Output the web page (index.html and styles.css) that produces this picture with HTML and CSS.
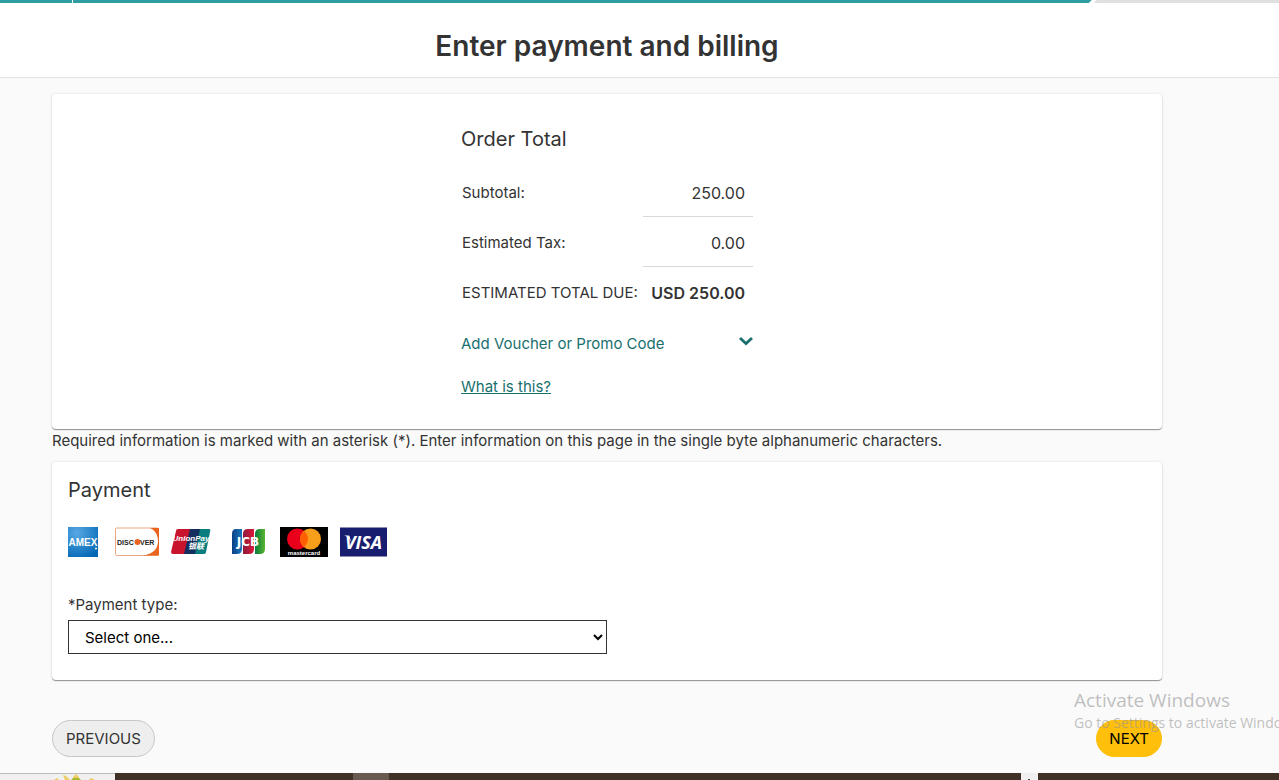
FILE: index.html
```html
<!DOCTYPE html>
<html lang="en">
<head>
    <meta charset="UTF-8">
    <meta name="viewport" content="width=device-width, initial-scale=1.0">
    <title>Enter payment and billing</title>
    <link rel="stylesheet" href="styles.css">
</head>
<body>

    <div class="progress">
        <div class="progress-first"></div>
        <div class="progress-done"></div>
        <div class="progress-left"></div>
    </div>

    <header class="page-header">
        <h1>Enter payment and billing</h1>
    </header>

    <main class="content">
        <section class="card order-card">
            <div class="order">
                <h2>Order Total</h2>
                <table class="totals">
                    <tr><th scope="row">Subtotal:</th><td>250.00</td></tr>
                    <tr><th scope="row">Estimated Tax:</th><td>0.00</td></tr>
                    <tr><th scope="row">ESTIMATED TOTAL DUE:</th><td><strong>USD 250.00</strong></td></tr>
                </table>
                <button type="button" class="voucher">
                    Add Voucher or Promo Code
                    <svg width="14" height="16" viewBox="1 0 14 16" aria-hidden="true"><path d="M2 4l6 5.500 6-5.500" fill="none" stroke="#19706f" stroke-width="2.800"/></svg>
                </button>
                <a href="#" class="help">What is this?</a>
            </div>
        </section>

        <p class="note">Required information is marked with an asterisk (*). Enter information on this page in the single byte alphanumeric characters.</p>

        <section class="card payment-card">
            <h2>Payment</h2>
            <div class="logos">
                <svg width="35" height="30" viewBox="0 0 35 30" role="img" aria-label="American Express">
                    <defs><radialGradient id="amex" cx="0.3" cy="0.2" r="0.9"><stop offset="0" stop-color="#58a9e4"/><stop offset="1" stop-color="#0368b5"/></radialGradient></defs>
                    <rect width="30" height="30" fill="url(#amex)"/>
                    <text x="15" y="19" font-size="10" font-weight="700" fill="#fff" text-anchor="middle">AMEX</text>
                    <circle cx="28" cy="21.500" r="1" fill="#fff"/>
                </svg>
                <svg width="44" height="30" viewBox="0 0 44 30" role="img" aria-label="Discover">
                    <rect x="0.500" y="1" width="43" height="27.500" rx="1" fill="#fff" stroke="#eda683"/>
                    <path d="M35 1h9v27.500H28C38 27 43 22 43 14 43 8 40 3 35 1z" fill="#e9651f"/>
                    <text x="2" y="17.500" font-size="7" font-weight="700" fill="#222">DISC</text>
                    <circle cx="22.500" cy="15" r="3" fill="#e9651f"/>
                    <text x="25" y="17.500" font-size="7" font-weight="700" fill="#222">VER</text>
                </svg>
                <svg width="47" height="30" viewBox="0 0 47 30" role="img" aria-label="UnionPay">
                    <path d="M7 2h13l-5 25H2q-2 0-2-2L5 4q0-2 2-2z" fill="#c9142d"/>
                    <path d="M19 2h12l-5 25H13z" fill="#142e5d"/>
                    <path d="M29 2h9q2 0 1 3l-4 20q0 2-2 2h-9z" fill="#087d7d"/>
                    <text x="20" y="14" font-size="8" font-weight="700" font-style="italic" fill="#fff" text-anchor="middle">UnionPay</text>
                    <text x="25" y="22" font-size="8" font-weight="700" font-style="italic" fill="#fff" text-anchor="middle">银联</text>
                </svg>
                <svg width="38" height="30" viewBox="0 0 38 30" role="img" aria-label="JCB">
                    <defs>
                        <linearGradient id="jcbBlue"><stop offset="0" stop-color="#0c3f86"/><stop offset="1" stop-color="#1678bc"/></linearGradient>
                        <linearGradient id="jcbRed"><stop offset="0" stop-color="#8c1b3b"/><stop offset="1" stop-color="#dc1839"/></linearGradient>
                        <linearGradient id="jcbGreen"><stop offset="0" stop-color="#087c3f"/><stop offset="1" stop-color="#5bb531"/></linearGradient>
                    </defs>
                    <path d="M6 2h6v20q0 5-5 5H2V7q0-5 4-5z" fill="url(#jcbBlue)"/>
                    <path d="M18 2h6v20q0 5-5 5h-6V7q0-5 5-5z" fill="url(#jcbRed)"/>
                    <path d="M30 2h5v20q0 5-5 5h-5V7q0-5 5-5z" fill="url(#jcbGreen)"/>
                    <text x="18" y="19" font-size="12" font-weight="700" fill="#fff" text-anchor="middle" class="wide">JCB</text>
                </svg>
                <svg width="48" height="30" viewBox="0 0 48 30" role="img" aria-label="Mastercard">
                    <rect width="48" height="30" fill="#000"/>
                    <circle cx="17.500" cy="12" r="10.500" fill="#eb001b"/>
                    <circle cx="30.500" cy="12" r="10.500" fill="#f79e1b"/>
                    <path d="M24 3.800a10.500 10.500 0 0 1 0 16.400a10.500 10.500 0 0 1 0-16.400z" fill="#ff5f00"/>
                    <text x="24" y="28" font-size="6" font-weight="700" fill="#fff" text-anchor="middle">mastercard</text>
                </svg>
                <svg width="47" height="30" viewBox="0 0 47 30" role="img" aria-label="Visa">
                    <rect y="0.500" width="47" height="29" fill="#191d70"/>
                    <text x="23.500" y="21.500" font-size="18" font-weight="700" font-style="italic" fill="#fff" text-anchor="middle" class="visa">VISA</text>
                    <path d="M4 8.500h5l3 8C10 12 8 9.500 4 8.500z" fill="#fff"/>
                </svg>
            </div>
            <label for="paymentType">*Payment type:</label>
            <select id="paymentType">
                <option>Select one...</option>
            </select>
        </section>

        <div class="actions">
            <button type="button" class="btn">PREVIOUS</button>
            <button type="button" class="btn btn-next">NEXT</button>
        </div>
    </main>

    <div class="watermark">
        <div class="watermark-title">Activate Windows</div>
        <div>Go to Settings to activate Windows.</div>
    </div>

    <div class="taskbar">
        <div class="task-start">
            <svg width="44" height="6" viewBox="0 0 44 6" aria-hidden="true"><path d="M0 6l3-2 2 2zM9 1l3 1 4 4h-5zM19 3l3-3 3 3v3h-6zM35 6l2-2 4 2z" fill="#efcb65"/><path d="M17 6l2-2h6l2 2z" fill="#a8b92c"/></svg>
        </div>
        <div class="task-item"></div>
        <div class="task-active"></div>
        <div class="task-space"></div>
        <div class="task-split"></div>
        <div class="task-end"></div>
    </div>

</body>
</html>
```
FILE: styles.css
```css
* { box-sizing: border-box; }
body { display: flex; flex-direction: column; height: 100vh; margin: 0; overflow: hidden; background: #fafafa; color: #333; font-family: Inter, "Liberation Sans", sans-serif; font-size: 15px; line-height: 20px; }
h1, h2, p { margin: 0; }
h2 { font-size: 20px; font-weight: 400; line-height: 26px; }

.progress { display: flex; flex: none; height: 3px; background: #fff; }
.progress-first { width: 72px; margin-right: 1px; background: #2e9ea2; }
.progress-done { flex: 11; background: #2e9ea2; clip-path: polygon(0 0, 100% 0, calc(100% - 3px) 100%, 0 100%); }
.progress-left { flex: 2; margin-left: 2px; background: #e0e0e0; clip-path: polygon(3px 0, 100% 0, 100% 100%, 0 100%); }

.page-header { flex: none; padding: 24px 117px 11px 52px; background: #fff; border-bottom: 1px solid #e2e2e2; text-align: center; }
.page-header h1 { font-size: 28px; font-weight: 600; line-height: 39px; }

.content { flex: 1; padding: 16px 117px 0 52px; }
.card { background: #fff; border-radius: 4px; box-shadow: 0 1px 1px rgba(0,0,0,0.4), 0 0 3px rgba(0,0,0,0.1); }

.order-card { display: flex; justify-content: center; padding: 32px 0; }
.order { width: 292px; }
.totals { width: 100%; margin-top: 14px; border-collapse: collapse; white-space: nowrap; }
.totals th { padding: 4px 0 0 1px; font-weight: 400; text-align: left; }
.totals td { width: 108px; height: 50px; padding: 4px 8px 0; border-bottom: 1px solid #d9d9d9; font-size: 16px; text-align: right; }
.totals tr:last-child td { border-bottom: 0; }
.totals strong { font-weight: 600; }
.voucher { display: flex; justify-content: space-between; width: 100%; margin: 18px 0 23px; padding: 0; border: 0; background: none; color: #19706f; font: inherit; cursor: pointer; }
.help { color: #19706f; }

.note { padding: 2px 0 11px; }

.payment-card { padding: 15px 16px 26px; }
.logos { display: flex; align-items: center; gap: 12px; margin: 24px 0 38px; font-family: "Liberation Sans", "Noto Sans CJK SC", sans-serif; }
.logos .wide { font-family: "DejaVu Sans", sans-serif; }
.logos .visa { font-family: "Open Sans", sans-serif; }
label { display: block; margin-bottom: 5px; }
select { display: block; width: 50%; height: 34px; padding: 0 0 0 12px; background: #fff; border: 1px solid #333; border-radius: 0; color: #000; font: inherit; }

.actions { display: flex; justify-content: space-between; margin-top: 40px; }
.btn { height: 37px; padding: 0 13px; background: #eee; border: 1px solid #c7c7c7; border-radius: 19px; color: #333; font: inherit; cursor: pointer; }
.btn-next { padding: 0 12px; background: #ffbf0a; border-color: #ffbf0a; color: #000; }

/* system notice floating over the page */
.watermark { position: absolute; top: 688px; left: calc(100% - 205px); color: rgba(150,150,150,0.6); font-family: "Open Sans", sans-serif; font-size: 14px; line-height: 22px; white-space: nowrap; pointer-events: none; }
.watermark-title { font-size: 19px; line-height: 24px; }

.taskbar { display: flex; flex: none; height: 7px; background: #3f3126; }
.task-start { display: flex; width: 115px; padding-left: 54px; background: #f0f0f0; border-top: 1px solid #bbb; }
.task-item { width: 238px; }
.task-active { width: 36px; background: #685a50; }
.task-space { flex: 1; }
.task-split { width: 17px; background: radial-gradient(circle at 8px 7px, #444 1px, #f0f0f0 1px); }
.task-end { width: 241px; }
```
